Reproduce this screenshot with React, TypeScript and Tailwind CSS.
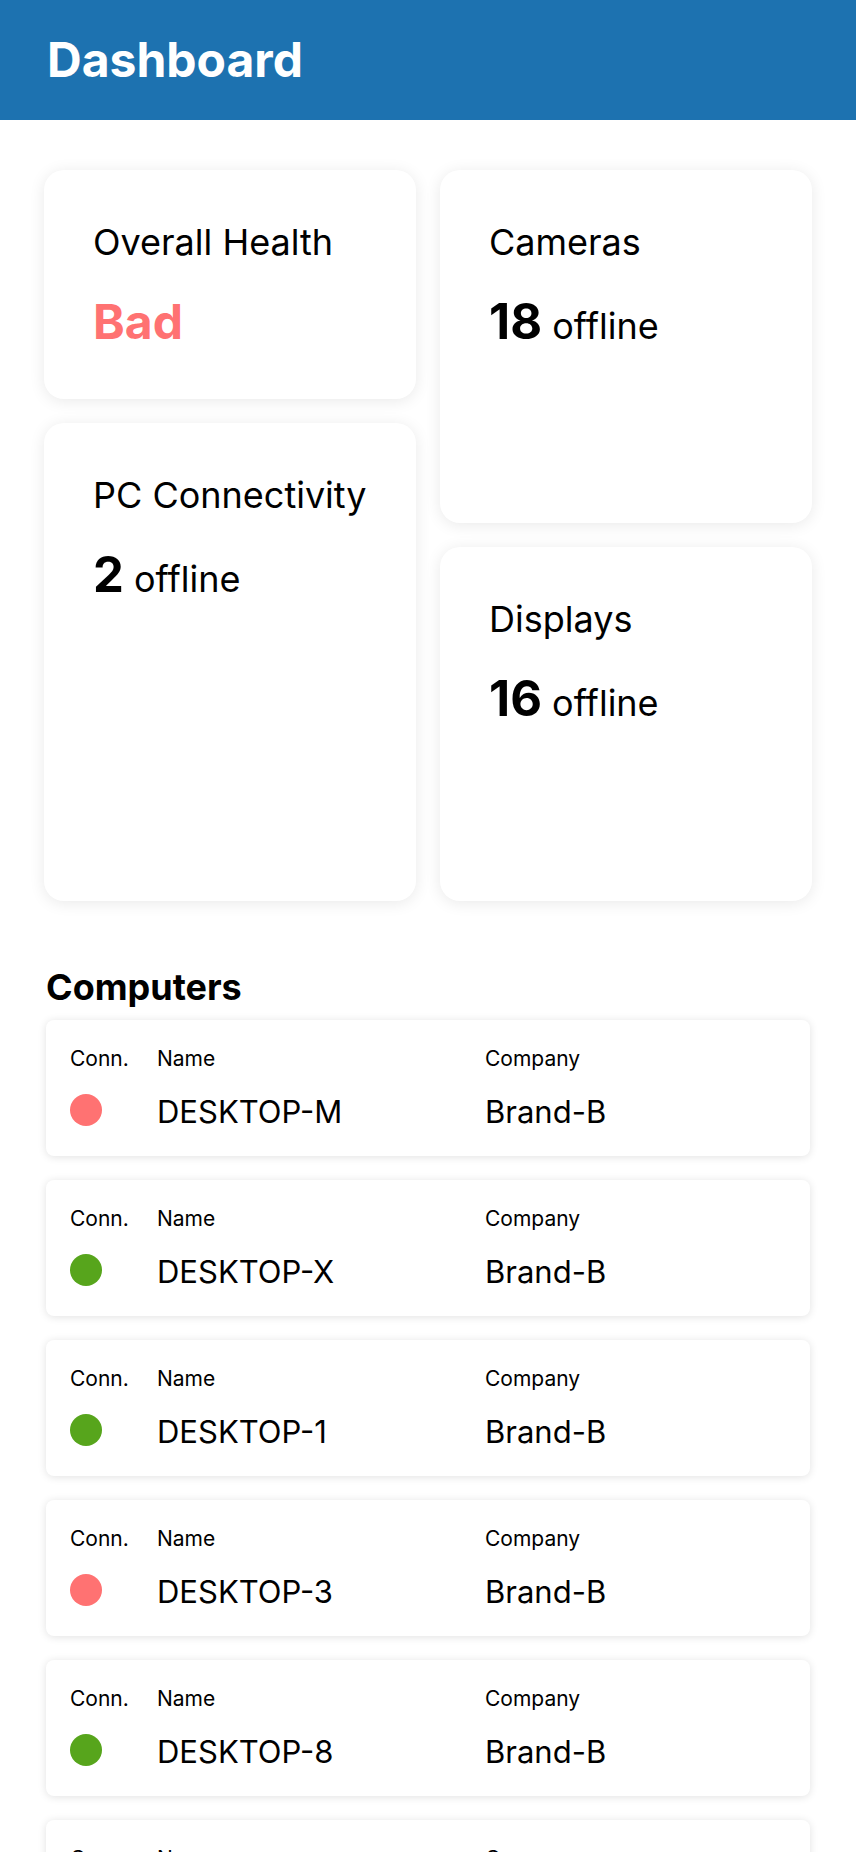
type Computer = { name: string; company: string; online: boolean }

const computers: Computer[] = [
  { name: 'DESKTOP-M', company: 'Brand-B', online: false },
  { name: 'DESKTOP-X', company: 'Brand-B', online: true },
  { name: 'DESKTOP-1', company: 'Brand-B', online: true },
  { name: 'DESKTOP-3', company: 'Brand-B', online: false },
  { name: 'DESKTOP-8', company: 'Brand-B', online: true },
  { name: 'DESKTOP-5', company: 'Brand-B', online: true },
  { name: 'DESKTOP-2', company: 'Brand-B', online: true },
]

const StatCard = ({
  title,
  height,
  children,
}: {
  title: string
  height: string
  children: React.ReactNode
}) => (
  <div
    className={`rounded-[20px] bg-white pl-[49px] pt-[50px] shadow-[0_2px_16px_rgba(0,0,0,0.09)] ${height}`}
  >
    <div className="text-[36px] leading-[44px] text-black">{title}</div>
    <div className="mt-[29px] leading-[58px] text-black">{children}</div>
  </div>
)

const Offline = ({ count }: { count: number }) => (
  <>
    <span className="text-[49px] font-bold">{count}</span>
    <span className="text-[36px]"> offline</span>
  </>
)

const ComputerRow = ({ pc }: { pc: Computer }) => (
  <div className="h-[136px] rounded-lg bg-white px-6 pt-[26px] shadow-[0_1px_8px_rgba(0,0,0,0.12)]">
    <div className="grid grid-cols-[87px_328px_1fr] text-[21px] leading-[26px] text-black">
      <div>Conn.</div>
      <div>Name</div>
      <div>Company</div>
    </div>
    <div className="mt-[22px] grid grid-cols-[87px_328px_1fr] text-[31px] leading-[36px] text-black">
      <div>
        <div className={`h-8 w-8 rounded-full ${pc.online ? 'bg-[#57a51c]' : 'bg-[#ff7272]'}`} />
      </div>
      <div>{pc.name}</div>
      <div>{pc.company}</div>
    </div>
  </div>
)

export default function App() {
  return (
    <div className="min-h-screen bg-white font-['Inter',sans-serif]">
      <header className="flex h-[120px] items-center bg-[#1d72b0] px-[47px]">
        <h1 className="text-[48px] font-bold leading-none text-white">Dashboard</h1>
      </header>

      <main className="px-[44px] pt-[50px] pb-10">
        <div className="flex gap-6">
          <div className="flex w-[372px] flex-col gap-6">
            <StatCard title="Overall Health" height="h-[229px]">
              <span className="text-[48px] font-bold text-[#ff7272]">Bad</span>
            </StatCard>
            <StatCard title="PC Connectivity" height="h-[478px]">
              <Offline count={2} />
            </StatCard>
          </div>
          <div className="flex w-[372px] flex-col gap-6">
            <StatCard title="Cameras" height="h-[353px]">
              <Offline count={18} />
            </StatCard>
            <StatCard title="Displays" height="h-[354px]">
              <Offline count={16} />
            </StatCard>
          </div>
        </div>

        <section className="mt-16 px-[2px]">
          <h2 className="text-[36px] font-bold leading-[44px] text-black">Computers</h2>
          <div className="mt-[11px] flex flex-col gap-6">
            {computers.map((pc) => (
              <ComputerRow key={pc.name} pc={pc} />
            ))}
          </div>
        </section>
      </main>
    </div>
  )
}
